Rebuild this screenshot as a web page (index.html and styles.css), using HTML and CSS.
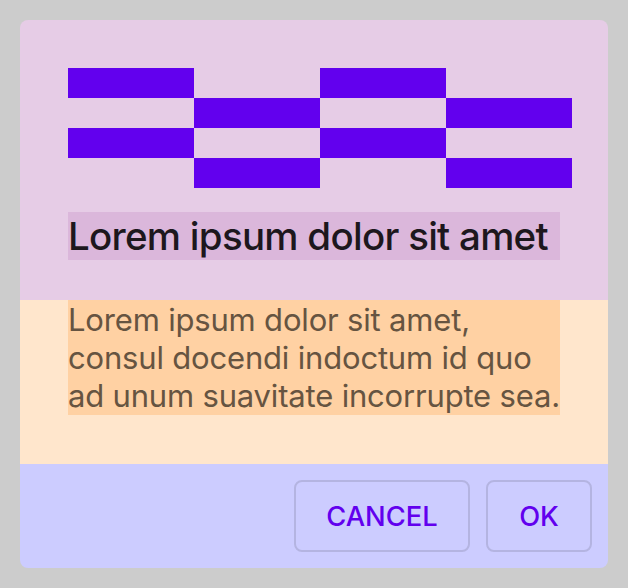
FILE: index.html
```html
<!DOCTYPE html>
<html lang="en">
<head>
<meta charset="utf-8">
<title>Dialog</title>
<link rel="stylesheet" href="styles.css">
</head>
<body>
<main class="dialog" role="dialog" aria-labelledby="title">
  <header class="header">
    <div class="pattern"></div>
    <h1 class="title" id="title">Lorem ipsum dolor sit amet</h1>
  </header>
  <section class="content">
    <p class="message">Lorem ipsum dolor sit amet,<br>consul docendi indoctum id quo<br>ad unum suavitate incorrupte sea.</p>
  </section>
  <footer class="actions">
    <button class="button cancel">CANCEL</button>
    <button class="button ok">OK</button>
  </footer>
</main>
</body>
</html>
```
FILE: styles.css
```css
* { box-sizing: border-box; }
body {
  margin: 0;
  padding: 20px;
  background: #cccccc;
  font-family: Inter, "Liberation Sans", sans-serif;
}
.dialog {
  width: 588px;
  height: 548px;
  border-radius: 8px;
  overflow: hidden;
}
.header {
  height: 280px;
  padding: 48px 48px 40px;
  background: #e6cce6;
}
.pattern {
  width: 504px;
  height: 120px;
  background: repeating-conic-gradient(transparent 0 25%, #6200ee 0 50%) 0 0 / 252px 60px;
}
.title {
  width: 492px;
  height: 48px;
  margin: 24px 0 0;
  background: #dbb7db;
  color: #1d171d;
  font-size: 38.5px;
  font-weight: 500;
  line-height: 48px;
  letter-spacing: -0.73px;
  white-space: nowrap;
}
.content {
  height: 164px;
  padding: 0 48px;
  background: #ffe6cc;
}
.message {
  width: 492px;
  height: 115px;
  margin: 0;
  padding-top: 1px;
  background: #ffd1a3;
  color: #665441;
  font-size: 31px;
  line-height: 38px;
  letter-spacing: -0.18px;
  white-space: nowrap;
}
.actions {
  display: flex;
  justify-content: flex-end;
  gap: 16px;
  height: 104px;
  padding: 16px;
  background: #ccccff;
}
.button {
  height: 72px;
  padding: 2px 0 0;
  border: 2px solid #b4b4e1;
  border-radius: 8px;
  background: none;
  color: #6200ee;
  font: 500 27.3px/66px Inter, "Liberation Sans", sans-serif;
}
.cancel { width: 176px; }
.ok { width: 106px; }
```
